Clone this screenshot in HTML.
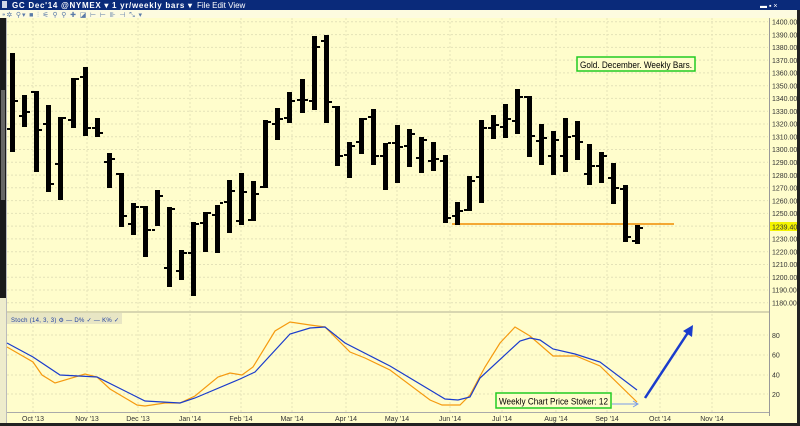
<!DOCTYPE html>
<html><head><meta charset="utf-8"><style>
body{margin:0;width:800px;height:426px;overflow:hidden;background:#fffdcc;font-family:"Liberation Sans",sans-serif}
svg{display:block}
</style></head><body>
<svg width="800" height="426" xmlns="http://www.w3.org/2000/svg" font-family="Liberation Sans, sans-serif">
<rect width="800" height="426" fill="#fffdcc"/>
<rect x="0" y="0" width="800" height="10" fill="#0a2a7a"/>
<text x="12" y="8" font-size="8" font-weight="bold" fill="#fff" textLength="180">GC Dec'14 @NYMEX ▾   1 yr/weekly bars ▾</text>
<text x="197" y="8" font-size="8" fill="#fff">File   Edit   View</text>
<rect x="2" y="1" width="5" height="7" fill="#cfd6e8"/>
<text x="760" y="8" font-size="7" fill="#fff">▬ ▪ ×</text>
<rect x="0" y="10" width="800" height="8" fill="#fdfbe0"/>
<g font-size="7" fill="#5a7aa8"><text x="2" y="17" textLength="140">⁍✲ ⚲▾ ■ ⫶ ⚟ ⚲ ⚲ ✚ ◪ ⊢ ⊢ ⊪ ⊣ ⤡ ▾</text></g>
<rect x="0" y="18" width="6" height="280" fill="#1a1a1a"/>
<rect x="1" y="90" width="4" height="110" fill="#666"/>
<rect x="0" y="298" width="6" height="128" fill="#eeeccc"/>
<rect x="6" y="18" width="1" height="408" fill="#bbb"/>
<rect x="797" y="10" width="3" height="416" fill="#222"/>
<rect x="769" y="18" width="1" height="398" fill="#999"/>
<g stroke="#e4e2b8" stroke-width="1" stroke-dasharray="2,2">
<line x1="7" x2="768" y1="21.8" y2="21.8"/><line x1="7" x2="768" y1="34.6" y2="34.6"/><line x1="7" x2="768" y1="47.4" y2="47.4"/><line x1="7" x2="768" y1="60.1" y2="60.1"/><line x1="7" x2="768" y1="72.9" y2="72.9"/><line x1="7" x2="768" y1="85.7" y2="85.7"/><line x1="7" x2="768" y1="98.4" y2="98.4"/><line x1="7" x2="768" y1="111.2" y2="111.2"/><line x1="7" x2="768" y1="124" y2="124"/><line x1="7" x2="768" y1="136.8" y2="136.8"/><line x1="7" x2="768" y1="149.5" y2="149.5"/><line x1="7" x2="768" y1="162.3" y2="162.3"/><line x1="7" x2="768" y1="175.1" y2="175.1"/><line x1="7" x2="768" y1="187.8" y2="187.8"/><line x1="7" x2="768" y1="200.6" y2="200.6"/><line x1="7" x2="768" y1="213.4" y2="213.4"/><line x1="7" x2="768" y1="226.1" y2="226.1"/><line x1="7" x2="768" y1="238.9" y2="238.9"/><line x1="7" x2="768" y1="251.7" y2="251.7"/><line x1="7" x2="768" y1="264.5" y2="264.5"/><line x1="7" x2="768" y1="277.2" y2="277.2"/><line x1="7" x2="768" y1="290" y2="290"/><line x1="7" x2="768" y1="302.7" y2="302.7"/>
<line x1="7" x2="768" y1="335" y2="335"/><line x1="7" x2="768" y1="355" y2="355"/><line x1="7" x2="768" y1="375" y2="375"/><line x1="7" x2="768" y1="394" y2="394"/>
<line y1="18" y2="412" x1="33" x2="33"/><line y1="18" y2="412" x1="87" x2="87"/><line y1="18" y2="412" x1="138" x2="138"/><line y1="18" y2="412" x1="190" x2="190"/><line y1="18" y2="412" x1="241" x2="241"/><line y1="18" y2="412" x1="292" x2="292"/><line y1="18" y2="412" x1="346" x2="346"/><line y1="18" y2="412" x1="397" x2="397"/><line y1="18" y2="412" x1="450" x2="450"/><line y1="18" y2="412" x1="502" x2="502"/><line y1="18" y2="412" x1="556" x2="556"/><line y1="18" y2="412" x1="607" x2="607"/><line y1="18" y2="412" x1="660" x2="660"/><line y1="18" y2="412" x1="712" x2="712"/>
</g>
<rect x="7" y="311" width="762" height="2" fill="#d8d6b0"/>
<rect x="7" y="313" width="115" height="11" fill="#e8e6c4"/>
<text x="11" y="322" font-size="6" fill="#2040a0" textLength="108">Stoch    (14, 3, 3) ⚙   — D% ✓  — K% ✓</text>
<rect x="7" y="412" width="762" height="1" fill="#aaa"/>
<rect x="0" y="423" width="800" height="3" fill="#222"/>
<line x1="452" y1="224" x2="674" y2="224" stroke="#f08c00" stroke-width="1.5"/>
<g fill="#000">
<rect x="10" y="53" width="5" height="99"/><rect x="7" y="128" width="3" height="2"/><rect x="15" y="100" width="3" height="2"/>
<rect x="22" y="95" width="5" height="32"/><rect x="19" y="115" width="3" height="2"/><rect x="27" y="111" width="3" height="2"/>
<rect x="34" y="91" width="5" height="81"/><rect x="31" y="91" width="3" height="2"/><rect x="39" y="129" width="3" height="2"/>
<rect x="46" y="105" width="5" height="87"/><rect x="43" y="123" width="3" height="2"/><rect x="51" y="183" width="3" height="2"/>
<rect x="58" y="117" width="5" height="83"/><rect x="55" y="163" width="3" height="2"/><rect x="63" y="117" width="3" height="2"/>
<rect x="71" y="78" width="5" height="50"/><rect x="68" y="119" width="3" height="2"/><rect x="76" y="78" width="3" height="2"/>
<rect x="83" y="67" width="5" height="69"/><rect x="80" y="76" width="3" height="2"/><rect x="88" y="127" width="3" height="2"/>
<rect x="95" y="118" width="5" height="19"/><rect x="92" y="127" width="3" height="2"/><rect x="100" y="132" width="3" height="2"/>
<rect x="107" y="153" width="5" height="35"/><rect x="104" y="161" width="3" height="2"/><rect x="112" y="158" width="3" height="2"/>
<rect x="119" y="173" width="5" height="54"/><rect x="116" y="173" width="3" height="2"/><rect x="124" y="215" width="3" height="2"/>
<rect x="131" y="203" width="5" height="32"/><rect x="128" y="223" width="3" height="2"/><rect x="136" y="206" width="3" height="2"/>
<rect x="143" y="206" width="5" height="51"/><rect x="140" y="206" width="3" height="2"/><rect x="148" y="229" width="3" height="2"/>
<rect x="155" y="190" width="5" height="36"/><rect x="152" y="229" width="3" height="2"/><rect x="160" y="195" width="3" height="2"/>
<rect x="167" y="207" width="5" height="80"/><rect x="164" y="267" width="3" height="2"/><rect x="172" y="208" width="3" height="2"/>
<rect x="179" y="250" width="5" height="30"/><rect x="176" y="270" width="3" height="2"/><rect x="184" y="252" width="3" height="2"/>
<rect x="191" y="222" width="5" height="74"/><rect x="188" y="252" width="3" height="2"/><rect x="196" y="223" width="3" height="2"/>
<rect x="203" y="212" width="5" height="40"/><rect x="200" y="222" width="3" height="2"/><rect x="208" y="212" width="3" height="2"/>
<rect x="215" y="205" width="5" height="48"/><rect x="212" y="214" width="3" height="2"/><rect x="220" y="202" width="3" height="2"/>
<rect x="227" y="180" width="5" height="53"/><rect x="224" y="201" width="3" height="2"/><rect x="232" y="190" width="3" height="2"/>
<rect x="239" y="173" width="5" height="52"/><rect x="236" y="220" width="3" height="2"/><rect x="244" y="191" width="3" height="2"/>
<rect x="251" y="181" width="5" height="40"/><rect x="248" y="219" width="3" height="2"/><rect x="256" y="193" width="3" height="2"/>
<rect x="263" y="120" width="5" height="68"/><rect x="260" y="186" width="3" height="2"/><rect x="268" y="121" width="3" height="2"/>
<rect x="275" y="108" width="5" height="32"/><rect x="272" y="123" width="3" height="2"/><rect x="280" y="118" width="3" height="2"/>
<rect x="287" y="92" width="5" height="31"/><rect x="284" y="117" width="3" height="2"/><rect x="292" y="100" width="3" height="2"/>
<rect x="300" y="79" width="5" height="34"/><rect x="297" y="99" width="3" height="2"/><rect x="305" y="99" width="3" height="2"/>
<rect x="312" y="36" width="5" height="74"/><rect x="309" y="100" width="3" height="2"/><rect x="317" y="46" width="3" height="2"/>
<rect x="324" y="35" width="5" height="88"/><rect x="321" y="40" width="3" height="2"/><rect x="329" y="101" width="3" height="2"/>
<rect x="335" y="106" width="5" height="60"/><rect x="332" y="106" width="3" height="2"/><rect x="340" y="155" width="3" height="2"/>
<rect x="347" y="142" width="5" height="36"/><rect x="344" y="154" width="3" height="2"/><rect x="352" y="145" width="3" height="2"/>
<rect x="359" y="118" width="5" height="36"/><rect x="356" y="141" width="3" height="2"/><rect x="364" y="118" width="3" height="2"/>
<rect x="371" y="109" width="5" height="56"/><rect x="368" y="116" width="3" height="2"/><rect x="376" y="155" width="3" height="2"/>
<rect x="383" y="143" width="5" height="47"/><rect x="380" y="155" width="3" height="2"/><rect x="388" y="142" width="3" height="2"/>
<rect x="395" y="125" width="5" height="58"/><rect x="392" y="142" width="3" height="2"/><rect x="400" y="146" width="3" height="2"/>
<rect x="407" y="129" width="5" height="38"/><rect x="404" y="145" width="3" height="2"/><rect x="412" y="133" width="3" height="2"/>
<rect x="419" y="137" width="5" height="36"/><rect x="416" y="157" width="3" height="2"/><rect x="424" y="139" width="3" height="2"/>
<rect x="431" y="142" width="5" height="29"/><rect x="428" y="160" width="3" height="2"/><rect x="436" y="158" width="3" height="2"/>
<rect x="443" y="155" width="5" height="68"/><rect x="440" y="160" width="3" height="2"/><rect x="448" y="217" width="3" height="2"/>
<rect x="455" y="202" width="5" height="23"/><rect x="452" y="215" width="3" height="2"/><rect x="460" y="210" width="3" height="2"/>
<rect x="467" y="176" width="5" height="35"/><rect x="464" y="209" width="3" height="2"/><rect x="472" y="180" width="3" height="2"/>
<rect x="479" y="120" width="5" height="83"/><rect x="476" y="176" width="3" height="2"/><rect x="484" y="127" width="3" height="2"/>
<rect x="491" y="115" width="5" height="24"/><rect x="488" y="127" width="3" height="2"/><rect x="496" y="124" width="3" height="2"/>
<rect x="503" y="104" width="5" height="34"/><rect x="500" y="126" width="3" height="2"/><rect x="508" y="118" width="3" height="2"/>
<rect x="515" y="89" width="5" height="45"/><rect x="512" y="120" width="3" height="2"/><rect x="520" y="96" width="3" height="2"/>
<rect x="527" y="96" width="5" height="61"/><rect x="524" y="96" width="3" height="2"/><rect x="532" y="135" width="3" height="2"/>
<rect x="539" y="124" width="5" height="41"/><rect x="536" y="140" width="3" height="2"/><rect x="544" y="137" width="3" height="2"/>
<rect x="551" y="131" width="5" height="44"/><rect x="548" y="155" width="3" height="2"/><rect x="556" y="139" width="3" height="2"/>
<rect x="563" y="118" width="5" height="54"/><rect x="560" y="155" width="3" height="2"/><rect x="568" y="136" width="3" height="2"/>
<rect x="575" y="121" width="5" height="39"/><rect x="572" y="135" width="3" height="2"/><rect x="580" y="141" width="3" height="2"/>
<rect x="587" y="144" width="5" height="41"/><rect x="584" y="173" width="3" height="2"/><rect x="592" y="165" width="3" height="2"/>
<rect x="599" y="152" width="5" height="31"/><rect x="596" y="165" width="3" height="2"/><rect x="604" y="155" width="3" height="2"/>
<rect x="611" y="163" width="5" height="41"/><rect x="608" y="177" width="3" height="2"/><rect x="616" y="187" width="3" height="2"/>
<rect x="623" y="185" width="5" height="57"/><rect x="620" y="188" width="3" height="2"/><rect x="628" y="236" width="3" height="2"/>
<rect x="635" y="225" width="5" height="19"/><rect x="632" y="240" width="3" height="2"/><rect x="640" y="227" width="3" height="2"/>
</g>
<g font-size="7" fill="#333">
<text x="772" y="24.5">1400.00</text><text x="772" y="37.3">1390.00</text><text x="772" y="50.1">1380.00</text><text x="772" y="62.8">1370.00</text><text x="772" y="75.6">1360.00</text><text x="772" y="88.4">1350.00</text><text x="772" y="101.1">1340.00</text><text x="772" y="113.9">1330.00</text><text x="772" y="126.7">1320.00</text><text x="772" y="139.5">1310.00</text><text x="772" y="152.2">1300.00</text><text x="772" y="165">1290.00</text><text x="772" y="177.8">1280.00</text><text x="772" y="190.5">1270.00</text><text x="772" y="203.3">1260.00</text><text x="772" y="216.1">1250.00</text>
<rect x="770" y="222" width="27" height="9" fill="#f4f400"/><text x="772" y="229.5">1239.40</text>
<text x="772" y="241.6">1230.00</text><text x="772" y="254.4">1220.00</text><text x="772" y="267.2">1210.00</text><text x="772" y="279.9">1200.00</text><text x="772" y="292.7">1190.00</text><text x="772" y="305.4">1180.00</text>
<text x="772" y="338">80</text><text x="772" y="357.5">60</text><text x="772" y="377.5">40</text><text x="772" y="397">20</text>
</g>
<g font-size="7" fill="#333" text-anchor="middle">
<text x="33" y="421">Oct '13</text><text x="87" y="421">Nov '13</text><text x="138" y="421">Dec '13</text><text x="190" y="421">Jan '14</text><text x="241" y="421">Feb '14</text><text x="292" y="421">Mar '14</text><text x="346" y="421">Apr '14</text><text x="397" y="421">May '14</text><text x="450" y="421">Jun '14</text><text x="502" y="421">Jul '14</text><text x="556" y="421">Aug '14</text><text x="607" y="421">Sep '14</text><text x="660" y="421">Oct '14</text><text x="712" y="421">Nov '14</text>
</g>
<polyline fill="none" stroke="#f59a10" stroke-width="1.2" points="7,347 33,362 42,375 55,383 85,374 97,377 110,389 137,405 145,406 165,403 180,403 195,396 218,377 230,373 242,375 253,367 275,331 290,322 310,325 325,327 350,352 365,358 390,370 430,400 442,405 460,405 470,395 485,367 500,343 515,327 530,336 553,356 576,356 600,366 637,402"/>
<polyline fill="none" stroke="#1a3ccc" stroke-width="1.2" points="7,343 33,357 60,375 97,377 145,401 180,403 195,398 240,379 255,372 290,334 310,328 325,327 345,343 390,366 430,390 445,399 458,400 470,397 480,378 520,341 530,338 540,340 553,349 575,354 600,362 637,390"/>
<line x1="645" y1="398" x2="689" y2="331" stroke="#1a3ccc" stroke-width="2.5"/>
<polygon points="693,325 692,337 683,331" fill="#1a3ccc"/>
<line x1="612" y1="404" x2="637" y2="404" stroke="#7a9ce8" stroke-width="1"/>
<polyline points="633,401 638,404 633,407" fill="none" stroke="#7a9ce8"/>
<rect x="577" y="57" width="118" height="14" fill="#fffdcc" stroke="#22cc22" stroke-width="1.5"/>
<text x="580" y="68" font-size="9.5" fill="#000" textLength="112" lengthAdjust="spacingAndGlyphs">Gold. December. Weekly Bars.</text>
<rect x="496" y="393" width="115" height="15" fill="#fffdcc" stroke="#22cc22" stroke-width="1.5"/>
<text x="499" y="404.5" font-size="9.5" fill="#000" textLength="109" lengthAdjust="spacingAndGlyphs">Weekly Chart Price Stoker: 12</text>
</svg>
</body></html>
